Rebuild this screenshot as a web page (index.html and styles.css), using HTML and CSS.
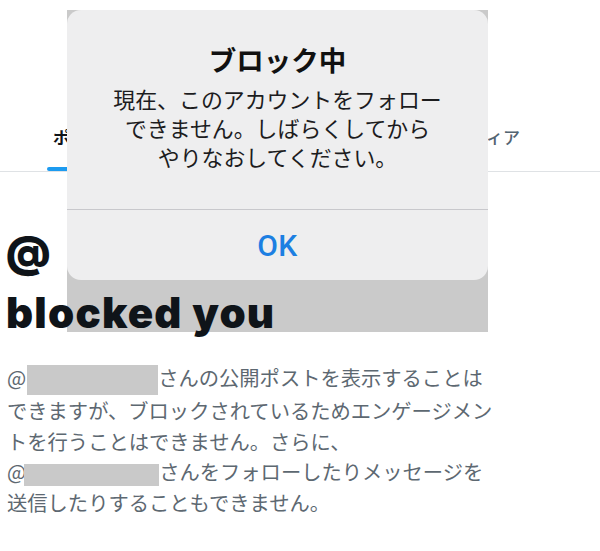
FILE: index.html
```html
<!DOCTYPE html>
<html lang="ja">
<head>
  <meta charset="UTF-8">
  <meta name="viewport" content="width=device-width, initial-scale=1.0">
  <title>ブロック中</title>
  <link rel="stylesheet" href="styles.css">
</head>
<body>

  <div class="profile">
    <nav class="tabs">
      <div class="tab active">
        <span class="tab-label">ポスト</span>
        <span class="tab-bar"></span>
      </div>
      <div class="tab"><span class="tab-label">メディア</span></div>
    </nav>

    <h1 class="blocked-title">@<br>blocked you</h1>

    <p class="blocked-text">
      @<span class="redact redact-first"></span>さんの公開ポストを表示することは<br>できますが、ブロックされているためエンゲージメン<br>トを行うことはできません。さらに、<br>@<span class="redact redact-second"></span>さんをフォローしたりメッセージを<br>送信したりすることもできません。
    </p>
  </div>

  <div class="overlay">
    <div class="alert">
      <div class="alert-body">
        <h2 class="alert-title">ブロック中</h2>
        <p class="alert-message">現在、このアカウントをフォロー<br>できません。しばらくしてから<br>やりなおしてください。</p>
      </div>
      <button type="button" class="alert-button">OK</button>
    </div>
  </div>

</body>
</html>
```

FILE: styles.css
```css
body {
  margin: 0;
  background: #fff;
  font-family: "Noto Sans CJK JP", "Liberation Sans", sans-serif;
  color: #0f1419;
}
.profile {
  width: 600px;
}
.tabs {
  height: 172px;
  display: flex;
  align-items: flex-end;
  justify-content: space-between;
  padding: 0 80px 0 53px;
  border-bottom: 1px solid #dfe2e5;
  box-sizing: border-box;
}
.tab {
  display: flex;
  flex-direction: column;
  font-size: 17px;
  line-height: 20px;
  color: #536471;
  font-weight: 500;
  padding-bottom: 24px;
}
.tab.active {
  color: #0f1419;
  font-weight: 700;
  padding-bottom: 0;
}
.tab-bar {
  height: 4px;
  margin: 20px -6px 0;
  border-radius: 2px;
  background: #1d9bf0;
}
.blocked-title {
  position: relative;
  z-index: 2;
  margin: 49px 0 0;
  padding-left: 6px;
  font-family: Inter, "Liberation Sans", sans-serif;
  font-size: 42px;
  line-height: 61px;
  font-weight: 900;
  letter-spacing: 1.2px;
  color: #0f1419;
}
.blocked-text {
  margin: 19px 0 0;
  padding-left: 7px;
  font-size: 20.3px;
  line-height: 30.5px;
  color: #5d6871;
}
.redact {
  display: inline-block;
  vertical-align: middle;
  background: #c9c9c9;
}
.redact-first {
  width: 131px;
  height: 30px;
  margin-left: 1px;
}
.redact-second {
  width: 135px;
  height: 22px;
  margin-left: -2px;
}
.overlay {
  position: absolute;
  left: 67px;
  top: 10px;
  width: 421px;
  height: 322px;
  z-index: 1;
  background: #cacaca;
}
.alert {
  height: 270px;
  display: flex;
  flex-direction: column;
  background: #eeeeef;
  border-radius: 14px;
}
.alert-body {
  padding: 32px 10px 0;
  height: 167px;
  text-align: center;
  border-bottom: 1px solid #c8c8cc;
}
.alert-title {
  margin: 0;
  font-size: 27.5px;
  line-height: 34px;
  font-weight: 700;
  color: #111;
}
.alert-message {
  margin: 8px 0 0;
  font-size: 21.9px;
  line-height: 29px;
  color: #1c1c1e;
}
.alert-button {
  flex: 1;
  border: none;
  background: none;
  font-family: Roboto, "Liberation Sans", sans-serif;
  font-size: 30px;
  font-weight: 500;
  letter-spacing: 0.5px;
  color: #1c7fe2;
  padding: 0;
}
```
